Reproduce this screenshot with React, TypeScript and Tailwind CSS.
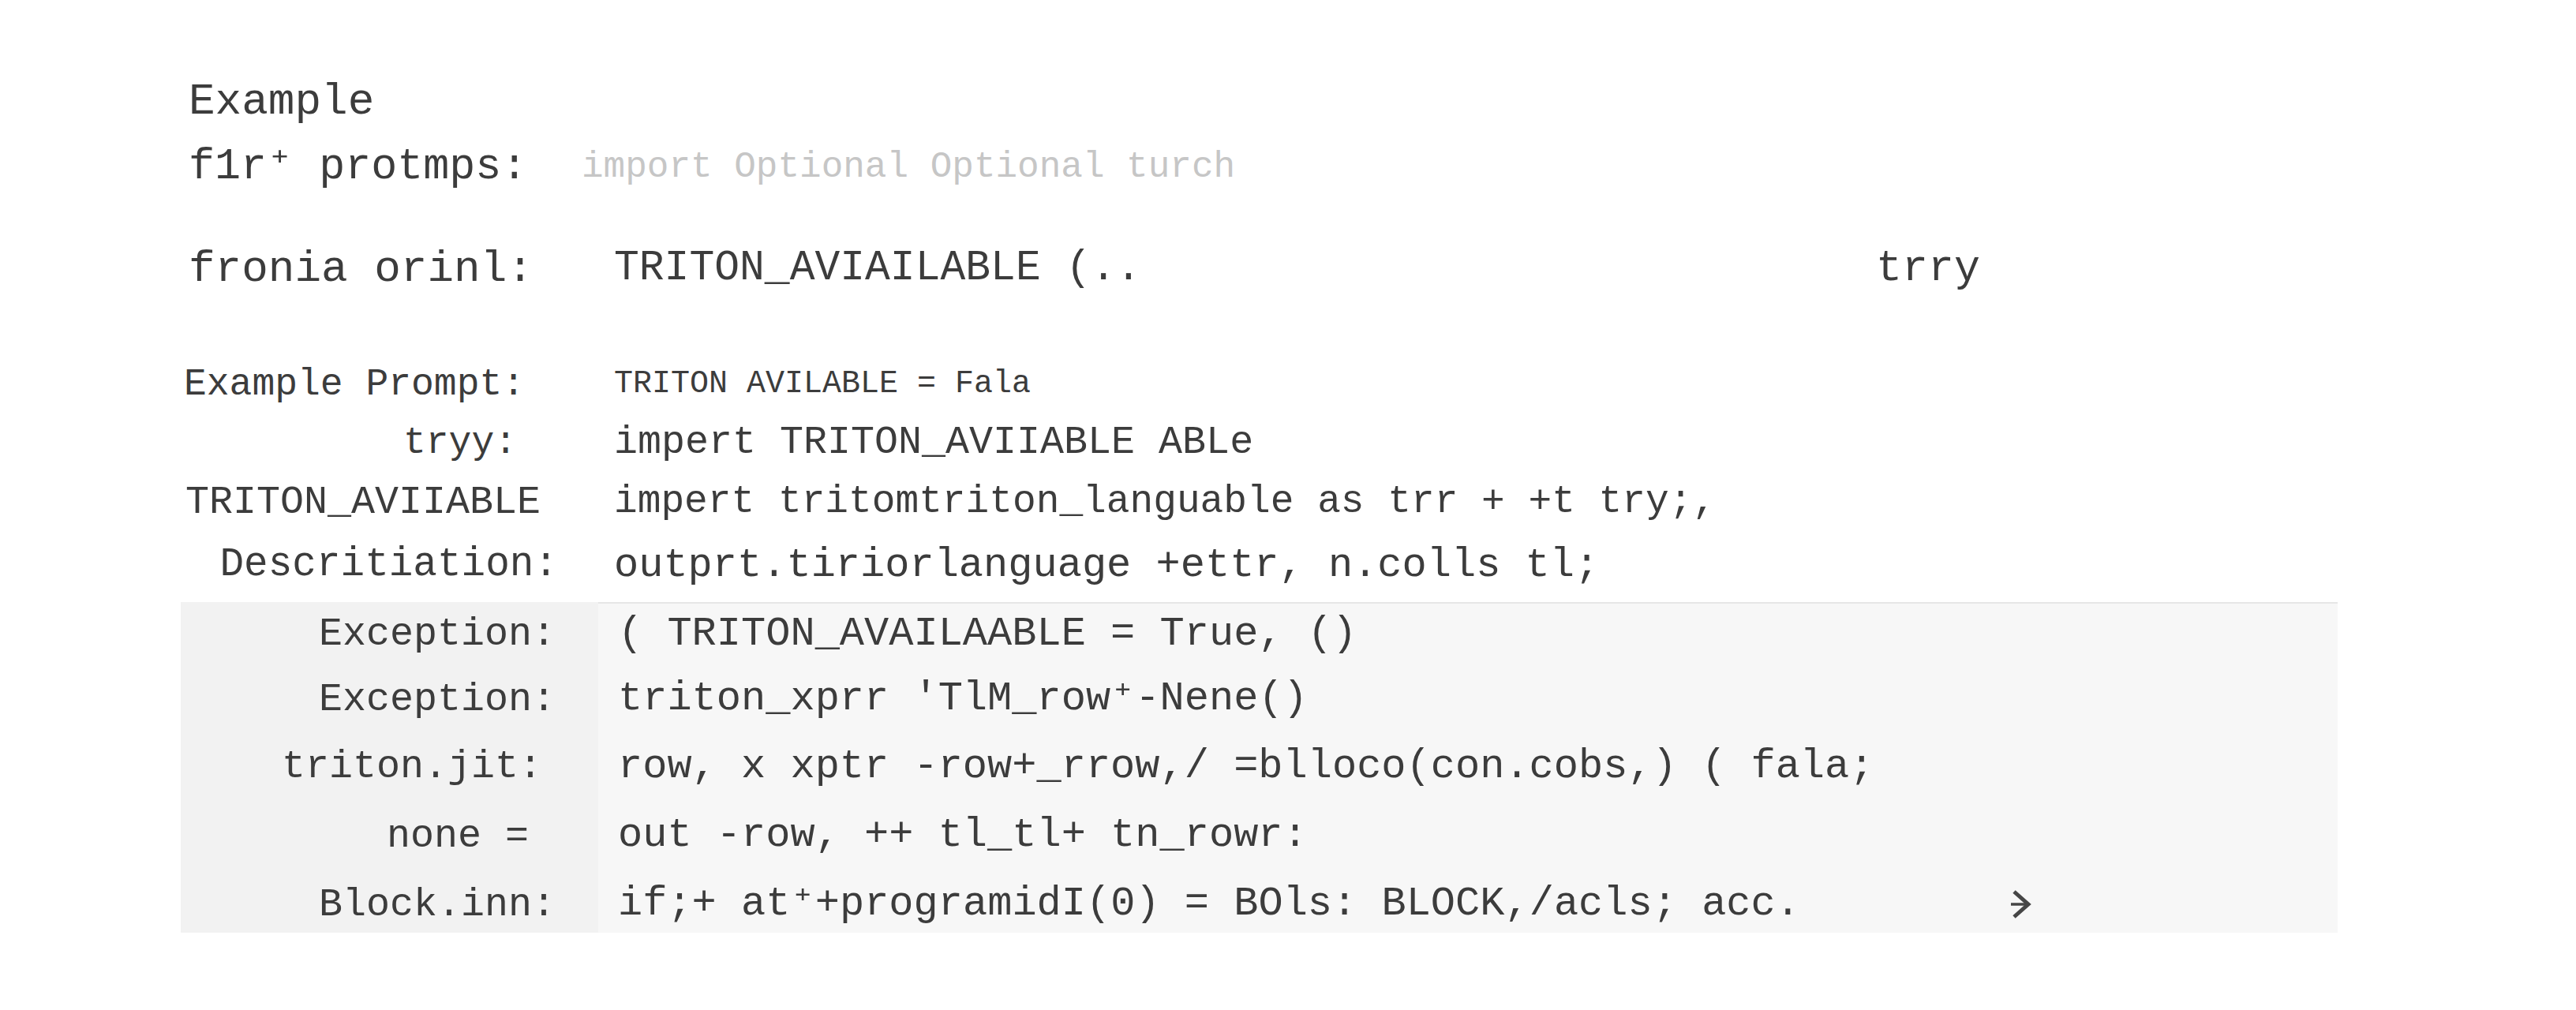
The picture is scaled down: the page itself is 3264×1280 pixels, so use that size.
const mono = "font-['Liberation_Mono','DejaVu_Sans_Mono',monospace]"

type Row = {
  label: string
  value: string
  labelClass: string
  valueClass: string
  h: string
}

const upperRows: Row[] = [
  {
    label: 'Example Prompt:',
    value: 'TRITON AVILABLE = Fala',
    labelClass: 'justify-start pl-[4px] text-[48px]',
    valueClass: 'text-[40px]',
    h: 'h-[75px]',
  },
  {
    label: 'tryy:',
    value: 'impert TRITON_AVIIABLE ABLe',
    labelClass: 'justify-end pr-[123px] text-[48px]',
    valueClass: 'text-[50px]',
    h: 'h-[73px]',
  },
  {
    label: 'TRITON_AVIIABLE',
    value: 'impert tritomtriton_languable as trr + +t try;,',
    labelClass: 'justify-start pl-[6px] text-[50px]',
    valueClass: 'text-[49.5px]',
    h: 'h-[78px]',
  },
  {
    label: 'Descritiation:',
    value: 'outprt.tiriorlanguage +ettr, n.colls tl;',
    labelClass: 'justify-end pr-[71px] text-[51px]',
    valueClass: 'text-[52px]',
    h: 'h-[83px]',
  },
]

const boxRows = [
  { label: 'Exception:', value: '( TRITON_AVAILAABLE = True, ()', pr: 'pr-[54px]', h: 'h-[80px]', pt: '' },
  { label: 'Exception:', value: "triton_xprr  'TlM_row⁺-Nene()", pr: 'pr-[54px]', h: 'h-[84px]', pt: 'pt-[2px]' },
  { label: 'triton.jit:', value: 'row, x xptr -row+_rrow,/ =blloco(con.cobs,) ( fala;', pr: 'pr-[71px]', h: 'h-[85px]', pt: 'pt-[4px]' },
  { label: 'none =', value: 'out -row, ++ tl_tl+ tn_rowr:', pr: 'pr-[88px]', h: 'h-[86px]', pt: 'pt-[8px]' },
  { label: 'Block.inn:', value: 'if;+ at⁺+programidI(0) = BOls: BLOCK,/acls; acc.', pr: 'pr-[54px]', h: 'h-[84px]', pt: 'pt-[12px]' },
]

function ArrowMark() {
  return (
    <svg width="30" height="38" viewBox="0 0 30 38" fill="none" aria-hidden="true">
      <path d="M7 3 L25 19 L7 35" stroke="#464646" strokeWidth="5" strokeLinejoin="miter" />
      <path d="M3 19 H24" stroke="#464646" strokeWidth="3.5" />
    </svg>
  )
}

export default function App() {
  return (
    <div className={`h-[1280px] w-[3264px] overflow-hidden bg-white text-[#3c3c3c] ${mono}`}>
      <div className="ml-[229px] flex w-[2733px] flex-col pt-[94px]">
        {/* heading */}
        <div className="flex h-[70px] items-center pl-[10px] text-[56px]">Example</div>

        <div className="mt-[13px] flex h-[70px] items-center">
          <div className="w-[508px] pl-[10px] text-[55px]">f1r⁺ protmps:</div>
          <div className="text-[46px] text-[#c6c6c6]">import Optional Optional turch</div>
        </div>

        <div className="mt-[59px] flex h-[70px] items-center">
          <div className="w-[549px] pl-[10px] text-[56px]">fronia orinl:</div>
          <div className="w-[1599px] text-[53px]">TRITON_AVIAILABLE (..</div>
          <div className="text-[55px]">trry</div>
        </div>

        {/* prompt rows */}
        <div className="mt-[73px] flex flex-col">
          {upperRows.map((r) => (
            <div key={r.label} className={`flex items-center ${r.h}`}>
              <div className={`flex w-[549px] ${r.labelClass}`}>{r.label}</div>
              <div className={r.valueClass}>{r.value}</div>
            </div>
          ))}
        </div>

        {/* code block */}
        <div className="mt-[5px] flex flex-col">
          {boxRows.map((r, i) => (
            <div key={i} className={`flex ${r.h}`}>
              <div className={`flex w-[529px] items-center justify-end bg-[#f2f2f2] text-[50px] ${r.pr} ${r.pt}`}>
                {r.label}
              </div>
              <div
                className={`flex flex-1 items-center bg-[#f7f7f7] pl-[25px] text-[52px] ${r.pt} ${
                  i === 0 ? 'border-t-2 border-[#e6e6e6]' : ''
                }`}
              >
                <span className={i === boxRows.length - 1 ? 'w-[1762px]' : ''}>{r.value}</span>
                {i === boxRows.length - 1 && <ArrowMark />}
              </div>
            </div>
          ))}
        </div>
      </div>
    </div>
  )
}
